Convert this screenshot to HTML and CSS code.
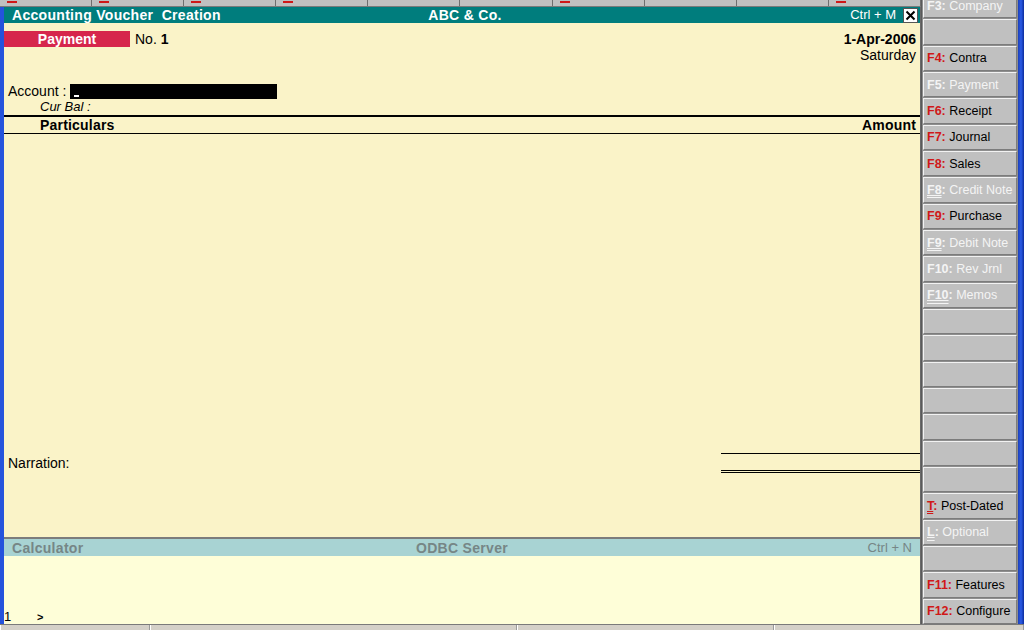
FILE: index.html
```html
<!DOCTYPE html>
<html lang="en">
<head>
  <meta charset="UTF-8">
  <title>Accounting Voucher Creation</title>
  <link rel="stylesheet" href="styles.css">
</head>
<body>
  <div class="screen">
    <div class="top">
      <div class="left-col">
        <!-- barra de botoes cortada no topo -->
        <div class="tabstrip">
          <div class="tab"><i></i></div>
          <div class="tab"><i></i></div>
          <div class="tab"><i></i></div>
          <div class="tab"><i></i></div>
          <div class="tab"></div>
          <div class="tab"></div>
          <div class="tab"><i></i></div>
          <div class="tab"></div>
          <div class="tab"></div>
          <div class="tab"><i></i></div>
        </div>

        <div class="window">
          <div class="voucher">
            <div class="titlebar">
              <span class="t-left">Accounting Voucher&nbsp; Creation</span>
              <span class="t-center">ABC &amp; Co.</span>
              <span class="t-right">Ctrl + M
                <span class="close">
                  <svg width="13" height="13" viewBox="0 0 13 13"><path d="M2.5 2.5 L10.5 10.5 M10.5 2.5 L2.5 10.5" stroke="#000" stroke-width="2"/></svg>
                </span>
              </span>
            </div>

            <div class="vbody">
              <div class="vhead">
                <div class="vleft">
                  <div class="vtype">Payment</div>
                  <div class="vno">No. <b>1</b></div>
                </div>
                <div class="vdate">
                  <div class="date">1-Apr-2006</div>
                  <div class="day">Saturday</div>
                </div>
              </div>

              <div class="account-row">
                <span class="lbl">Account :</span>
                <span class="acc-input"><span class="cursor"></span></span>
              </div>
              <div class="curbal">Cur Bal :</div>

              <div class="cols">
                <span>Particulars</span>
                <span>Amount</span>
              </div>

              <div class="entries"></div>

              <div class="narration-row">
                <span class="lbl">Narration:</span>
                <span class="total"></span>
              </div>
            </div>

            <div class="calcbar">
              <span class="c-left">Calculator</span>
              <span class="c-center">ODBC Server</span>
              <span class="c-right">Ctrl + N</span>
            </div>
            <div class="calc">
              <div class="calc-line"><span class="num">1</span><span class="prompt">&gt;</span></div>
            </div>
          </div>
        </div>
      </div>

      <div class="sidebar">
        <div class="keys">
          <div class="fkey off"><b>F3:</b>&nbsp;Company</div>
          <div class="fkey"></div>
          <div class="fkey"><b>F4:</b>&nbsp;Contra</div>
          <div class="fkey off"><b>F5:</b>&nbsp;Payment</div>
          <div class="fkey"><b>F6:</b>&nbsp;Receipt</div>
          <div class="fkey"><b>F7:</b>&nbsp;Journal</div>
          <div class="fkey"><b>F8:</b>&nbsp;Sales</div>
          <div class="fkey off"><b><u>F8</u>:</b>&nbsp;Credit Note</div>
          <div class="fkey"><b>F9:</b>&nbsp;Purchase</div>
          <div class="fkey off"><b><u>F9</u>:</b>&nbsp;Debit Note</div>
          <div class="fkey off"><b>F10:</b>&nbsp;Rev Jrnl</div>
          <div class="fkey off"><b><u>F10</u>:</b>&nbsp;Memos</div>
          <div class="fkey"></div>
          <div class="fkey"></div>
          <div class="fkey"></div>
          <div class="fkey"></div>
          <div class="fkey"></div>
          <div class="fkey"></div>
          <div class="fkey"></div>
          <div class="fkey"><b><u>T</u>:</b>&nbsp;Post-Dated</div>
          <div class="fkey off"><b><u>L</u>:</b>&nbsp;Optional</div>
          <div class="fkey"></div>
          <div class="fkey"><b>F11:</b>&nbsp;Features</div>
          <div class="fkey"><b>F12:</b>&nbsp;Configure</div>
        </div>
      </div>
      <div class="edge-right"></div>
    </div>

    <div class="statusbar">
      <div class="seg s1"></div>
      <div class="seg s2"></div>
      <div class="seg s3"></div>
      <div class="seg s4"></div>
    </div>
  </div>
</body>
</html>
```

FILE: styles.css
```css
body {
  margin: 0;
  padding: 0;
  width: 1024px;
  height: 630px;
  overflow: hidden;
  background: #d4d0c8;
  font-family: 'Liberation Sans', Arial, sans-serif;
  color: #000;
}

.screen {
  display: flex;
  flex-direction: column;
  height: 630px;
}

.top {
  display: flex;
  height: 624px;
}

.left-col {
  width: 921px;
  display: flex;
  flex-direction: column;
}

/* barra de cima */
.tabstrip {
  height: 6px;
  display: flex;
  background: #c0c0c0;
  border-bottom: 1px solid #7a7a7a;
}

.tab {
  flex: 1;
  border-right: 1px solid #6e6e6e;
  position: relative;
}

.tab i {
  position: absolute;
  left: 7px;
  top: 1px;
  width: 10px;
  height: 2px;
  background: #d01818;
}

.window {
  flex: 1;
  display: flex;
  border-left: 4px solid #2553dc;
}

.voucher {
  flex: 1;
  display: flex;
  flex-direction: column;
  border-right: 1px solid #6a6a6a;
  background: #faf3c8;
}

.titlebar {
  height: 16px;
  display: grid;
  grid-template-columns: 1fr auto 1fr;
  align-items: center;
  background: #007d7d;
  color: #fff;
  font-size: 14px;
  line-height: 16px;
  padding: 0 2px 0 8px;
}

.t-left, .t-center {
  font-weight: bold;
  letter-spacing: 0.3px;
}

.t-right {
  justify-self: end;
  display: flex;
  align-items: center;
  gap: 7px;
  font-size: 13px;
}

.close {
  width: 15px;
  height: 15px;
  box-sizing: border-box;
  background: #fff;
  border: 1px solid #555;
  display: flex;
  align-items: center;
  justify-content: center;
}

.vbody {
  flex: 1;
  display: flex;
  flex-direction: column;
  font-size: 14px;
}

.vhead {
  margin-top: 8px;
  display: flex;
  justify-content: space-between;
}

.vleft {
  display: flex;
  align-items: flex-start;
}

.vtype {
  width: 126px;
  height: 16px;
  line-height: 16px;
  background: #d6264c;
  color: #fff;
  font-weight: bold;
  font-size: 14px;
  text-align: center;
}

.vno {
  margin-left: 5px;
  line-height: 16px;
}

.vdate {
  text-align: right;
  padding-right: 4px;
  line-height: 16px;
}

.date {
  font-weight: bold;
}

.account-row {
  margin-top: 20px;
  height: 16px;
  display: flex;
  align-items: center;
  padding-left: 4px;
}

.account-row .lbl {
  width: 62px;
}

.acc-input {
  width: 207px;
  height: 15px;
  background: #000;
  position: relative;
}

.cursor {
  position: absolute;
  left: 4px;
  bottom: 2px;
  width: 5px;
  height: 2px;
  background: #fff;
}

.curbal {
  margin-top: 1px;
  height: 14px;
  line-height: 14px;
  padding-left: 36px;
  font-style: italic;
  font-size: 13px;
}

.cols {
  margin-top: 1px;
  border-top: 2px solid #000;
  border-bottom: 1px solid #000;
  height: 16px;
  line-height: 16px;
  display: flex;
  justify-content: space-between;
  padding: 0 4px 0 36px;
  font-weight: bold;
  letter-spacing: 0.2px;
}

.entries {
  flex: 1;
}

.narration-row {
  display: flex;
  justify-content: space-between;
  align-items: center;
  padding-bottom: 64px;
}

.narration-row .lbl {
  padding-left: 4px;
}

.total {
  width: 199px;
  height: 16px;
  border-top: 1px solid #000;
  border-bottom: 3px double #000;
}

/* calculadora */
.calcbar {
  height: 17px;
  border-top: 2px solid #7c7c7c;
  background: #a8d3d3;
  display: grid;
  grid-template-columns: 1fr auto 1fr;
  align-items: center;
  padding: 0 8px;
  font-size: 13px;
  color: #768686;
}

.c-left, .c-center {
  font-weight: bold;
  font-size: 14px;
  letter-spacing: 0.3px;
}

.c-right {
  justify-self: end;
}

.calc {
  height: 68px;
  background: #fefed8;
  display: flex;
  flex-direction: column;
  justify-content: flex-end;
}

.calc-line {
  height: 14px;
  line-height: 14px;
  font-size: 13px;
  display: flex;
}

.calc-line .num {
  width: 33px;
}

.calc-line .prompt {
  font-size: 11px;
  font-weight: bold;
}

/* botoes do lado direito */
.sidebar {
  width: 97px;
  height: 624px;
  overflow: hidden;
  background: #8e8e8e;
  border-left: 1px solid #5a5a5a;
  box-sizing: border-box;
}

.keys {
  margin-top: -7px;
  height: 631px;
  display: grid;
  grid-template-rows: repeat(24, 1fr);
  gap: 1px;
  padding: 0 1px 0 1px;
}

.fkey {
  background: #c0c0c0;
  border: 1px solid;
  border-color: #f2f2f2 #7c7c7c #7c7c7c #f2f2f2;
  display: flex;
  align-items: center;
  padding-left: 3px;
  font-size: 12.5px;
  white-space: nowrap;
  overflow: hidden;
}

.fkey b {
  color: #d01818;
}

.fkey u {
  text-decoration-style: double;
}

.fkey.off,
.fkey.off b {
  color: #f4f4f4;
}

.edge-right {
  width: 6px;
  background: linear-gradient(90deg, #1c3fb8, #2a5ae6 50%, #0b2c9c);
}

.statusbar {
  height: 6px;
  display: flex;
  border-top: 1px solid #7a7a7a;
  background: #d4d0c8;
}

.seg {
  border-right: 1px solid #9a9a9a;
  border-left: 1px solid #fff;
}

.s1 { width: 148px; }
.s2 { width: 365px; }
.s3 { width: 255px; }
.s4 { flex: 1; }
```
